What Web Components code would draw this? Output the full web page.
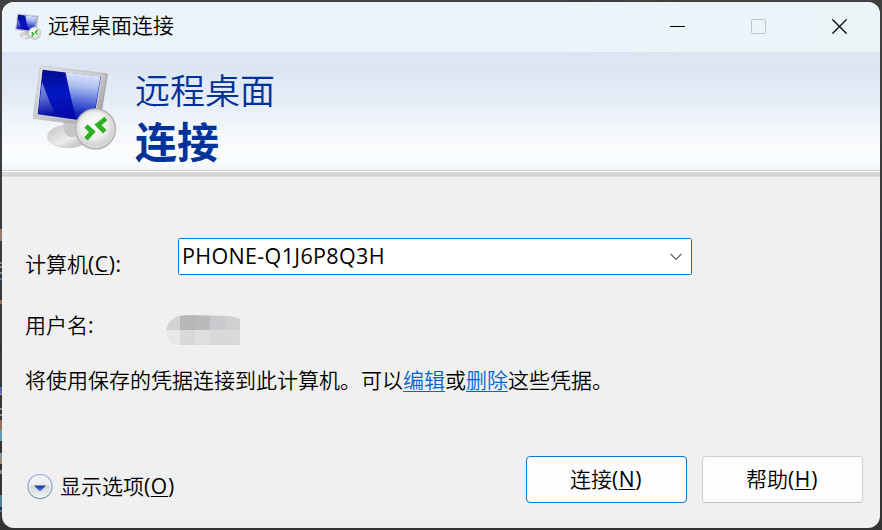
<!DOCTYPE html>
<html lang="zh-CN">
<head>
<meta charset="utf-8">
<title>远程桌面连接</title>
<style>
html,body{margin:0;width:882px;height:530px;overflow:hidden}
body{font:21px/28px "Open Sans","Noto Sans CJK SC",sans-serif;color:#000;box-sizing:border-box;padding:2px;
background:linear-gradient(#0000 0 229px,#957b6a 229px 241px,#0000 241px 262px,#8a8a8c 262px 264px,#0000 264px 266px,#8a8a8c 266px 268px,#0000 268px 272px,#888 272px 274px,#0000 274px 278px,#3d6fc4 278px 280px,#0000 280px 300px,#8f6c60 300px 304px,#0000 304px 387px,#5862ad 387px 393px,#999 394px 395px,#0000 395px 408px,#909090 408px 410px,#0000 410px 414px,#909090 414px 416px,#0000 416px 420px,#94735c 420px 430px,#609ab4 430px 441px,#0000 441px 453px,#83949f 453px 458px,#a28c78 460px 464px,#0000 464px 470px,#8c8680 470px 474px,#0000 474px 495px,#4f8199 495px 507px,#0000 507px 510px,#3b70be 510px 512px,#0000 512px) 0 0/2px 530px no-repeat,linear-gradient(#404040,#38393c 50%,#343434)}
</style>
</head>
<body>
<rd-window></rd-window>
<script>
const define=(name,html)=>customElements.define(name,class extends HTMLElement{
  constructor(){super();const t=document.createElement('template');t.innerHTML=html;this.attachShadow({mode:'open'}).append(t.content.cloneNode(true));}
});

define('rd-icon',`<style>:host{display:block}svg{display:block;width:100%;height:100%}</style>
<svg viewBox="0 0 86 88">
<defs>
<linearGradient id="s" x1="0" y1="0" x2=".25" y2="1"><stop offset="0" stop-color="#000c8a"/><stop offset=".5" stop-color="#0416c4"/><stop offset="1" stop-color="#0208a4"/></linearGradient>
<linearGradient id="g" gradientUnits="userSpaceOnUse" x1="52" y1="8" x2="46" y2="56"><stop offset="0" stop-color="#dfe7fc"/><stop offset=".3" stop-color="#a9bbf2"/><stop offset=".62" stop-color="#4c63d6"/><stop offset=".9" stop-color="#0a1cb8"/></linearGradient>
<linearGradient id="h" gradientUnits="userSpaceOnUse" x1="9" y1="17" x2="13" y2="50"><stop offset="0" stop-color="#8494e0"/><stop offset=".5" stop-color="#5868d0"/><stop offset="1" stop-color="#0810a8"/></linearGradient>
<linearGradient id="f" x1="0" y1="0" x2="1" y2="1"><stop offset="0" stop-color="#e2e2e2"/><stop offset=".5" stop-color="#c9c9c9"/><stop offset="1" stop-color="#969696"/></linearGradient>
<linearGradient id="b" x1="0" y1="0" x2="1" y2="1"><stop offset="0" stop-color="#c2c2c2"/><stop offset=".55" stop-color="#ececec"/><stop offset="1" stop-color="#aaa"/></linearGradient>
<radialGradient id="c" cx=".45" cy=".4"><stop offset="0" stop-color="#fff"/><stop offset=".7" stop-color="#ededed"/><stop offset="1" stop-color="#d3d3d3"/></radialGradient>
</defs>
<ellipse cx="35" cy="71.500" rx="20.500" ry="11.300" fill="url(#b)" stroke="#c8c8c8" stroke-width=".6"/>
<path d="M30 56 46 60 45 70Q37 75 32 68Z" fill="#c6c6c6"/>
<path d="M7.500 1.700Q8 .8 9.500 1L73.500 8.500 74.500 9.800 66 62 .800 53.500 0 52Z" fill="url(#f)" stroke="#b9bdc1" stroke-width=".6"/>
<path d="M9.500 4.500 68 11.500 60.500 57.500 4.500 49.500Z" fill="url(#s)"/>
<path d="M32.500 7.300 67.500 11.600 60 57.300 43.500 55Q37 31 32.500 7.300Z" fill="url(#g)"/>
<path d="M9 17Q15 33 23 51.800L5 49Z" fill="url(#h)"/>
<path d="M9 4.200 68.500 11.300 61 57.700 4 49.500Z" fill="none" stroke="#e4e8ee" stroke-width=".6"/>
<path d="M70.500 9 74 9.700 67 55" fill="none" stroke="#a3a6a9" stroke-width="1"/>
<circle cx="62.500" cy="64" r="20" fill="url(#c)" stroke="#b6b6b6" stroke-width="1.500"/>
<circle cx="62.500" cy="64" r="18" fill="none" stroke="#ddd" stroke-width="1"/>
<path d="M53 61 59.300 66.800 53 74M73 53.500 65 60 71.800 66.800" fill="none" stroke="#2fb022" stroke-width="4.800"/>
</svg>`);

define('rd-titlebar',`<style>
:host{display:flex;height:50px;align-items:center;background:linear-gradient(90deg,#ebf4fb,#ebf4fa 60%,#ebf5f8);padding-left:13px;box-sizing:border-box}
rd-icon{width:27px;height:28px;margin-top:-1px}
.title{margin-left:6px;flex:1;font-weight:350;white-space:nowrap;margin-top:-4px}
.controls{display:grid;grid-template-columns:81px 81px 81px;height:48px;margin-top:-2px;align-items:center;justify-items:center}
svg{display:block}
</style><rd-icon></rd-icon><div class="title"><slot></slot></div>
<div class="controls">
<svg width="15" height="15"><path d="M0 7.500H15" stroke="#000"/></svg>
<svg width="15" height="15"><rect x=".5" y=".5" width="14" height="14" rx="1" fill="none" stroke="#bec4c7"/></svg>
<svg width="15" height="15"><path d="M.4.4 14.600 14.600M14.600.4.4 14.600" stroke="#111" stroke-width="1.400"/></svg>
</div>`);

define('rd-banner',`<style>
:host{display:flex;height:118px;box-sizing:border-box;padding:13px 0 0 31px;background:linear-gradient(#dbe5f4 0,#dde6f3 17%,#e7eef8 45%,#f3f6fa 64%,#fafcfd 85%,#f8fcfe 92%,#f2f5f8);color:#039}
rd-icon{width:86px;height:88px;flex:none}
.text{margin-left:16px;white-space:nowrap}
.a{font-size:35px;line-height:52px;font-weight:350}
.b{font-size:42px;line-height:50px;font-weight:700}
</style><rd-icon></rd-icon><div class="text"><div class="a"><slot name="first"></slot></div><div class="b"><slot name="second"></slot></div></div>`);

define('rd-rule',`<style>:host{display:block;height:8px;background:linear-gradient(#c9ccd0 0 1px,#fdfdfd 1px 2px,#d8d8d8 2px 3px,#d8d8d8 3px 5px,#cfcfcf 5px 6px,#dfdfdf 6px 7px,#f0f0f0 7px)}</style>`);

define('rd-field',`<style>:host{display:grid;grid-template-columns:153px auto;white-space:nowrap}.l{font-weight:350}</style><div class="l"><slot name="label"></slot></div><slot></slot>`);

define('rd-combo',`<style>
:host{display:flex;box-sizing:border-box;width:514px;height:37px;border:1px solid #0078d4;border-radius:1.500px;background:#fff;align-items:center;justify-content:space-between;padding:0 9px 0 3px}
span{font-size:21.500px;letter-spacing:.34px;margin-top:-2px}
</style><span><slot></slot></span><svg width="12" height="8"><path d="M.7 1 6 6.300 11.300 1" fill="none" stroke="#606060" stroke-width="1.200"/></svg>`);

define('rd-mosaic',`<style>:host{display:block;width:74px;height:30px}svg{display:block}</style>
<svg width="74" height="30"><defs><clipPath id="m"><path d="M12 1 22 0 62 1Q70 2 74 4V30H7Q0 25 0 15 2 5 12 1Z"/></clipPath></defs>
<g clip-path="url(#m)" shape-rendering="crispEdges">
<path fill="#d2d2d2" d="M0 0H14V15H0Z"/><path fill="#b7b7b7" d="M14 0H32V15H14Z"/><path fill="#bbb9b9" d="M32 0H44V15H32Z"/><path fill="#c9cacd" d="M44 0H59V15H44Z"/><path fill="#cfd0d2" d="M59 0H74V15H59Z"/>
<path fill="#e8e8e8" d="M0 15H14V30H0Z"/><path fill="#d8d9d7" d="M14 15H29V30H14Z"/><path fill="#dfe0dd" d="M29 15H44V30H29Z"/><path fill="#d7d9d9" d="M44 15H59V30H44Z"/><path fill="#d8d9da" d="M59 15H74V30H59Z"/></g></svg>`);

define('rd-link',`<style>:host{color:#06c;text-decoration:underline;text-decoration-thickness:1px;text-underline-offset:3px;text-decoration-skip-ink:none}</style><slot></slot>`);
define('rd-key',`<style>:host{font-weight:400;letter-spacing:.5px}u{text-decoration:underline;text-decoration-thickness:1px;text-underline-offset:2px;text-decoration-skip-ink:none;letter-spacing:.9px}</style>(<u><slot></slot></u>)`);

define('rd-expander',`<style>:host{display:flex;align-items:center;gap:7px;font-weight:350;white-space:nowrap}svg{display:block}span{margin-top:-1px}</style>
<svg width="26" height="26"><defs><linearGradient id="e" x1="0" y1="0" x2="0" y2="1"><stop offset="0" stop-color="#fafbfb"/><stop offset=".48" stop-color="#e5e9e7"/><stop offset=".5" stop-color="#d3d9d7"/><stop offset="1" stop-color="#f2f5f3"/></linearGradient><linearGradient id="r" x1="0" y1="0" x2="0" y2="1"><stop offset="0" stop-color="#9cabed"/><stop offset="1" stop-color="#8c99b5"/></linearGradient><linearGradient id="t" x1="0" y1="0" x2="0" y2="1"><stop offset="0" stop-color="#182c78"/><stop offset=".5" stop-color="#3459d6"/><stop offset="1" stop-color="#5b82ee"/></linearGradient></defs>
<circle cx="13" cy="12.500" r="12" fill="url(#e)" stroke="url(#r)" stroke-width="1.300"/><circle cx="13" cy="12.500" r="10.800" fill="none" stroke="#f8fafa"/><path d="M7 11.500H19L13 17.500Z" fill="url(#t)"/></svg><span><slot></slot></span>`);

define('rd-button',`<style>:host{display:flex;box-sizing:border-box;width:161px;height:47px;border:1px solid #d0d0d0;border-bottom-color:#bcbcbc;border-radius:4px;background:#fdfdfd;align-items:center;justify-content:center;font-weight:350}:host([primary]){border-color:#0078d4}span{margin:-2px 0 0 -1px}</style><span><slot></slot></span>`);

define('rd-window',`<style>
:host{display:flex;flex-direction:column;width:878px;height:526px;border-radius:12px;background:#f0f0f0;overflow:hidden}
main{flex:1;display:flex;flex-direction:column;padding:60px 17px 25px 23px}
.c [slot=label]{padding-top:12px;height:25px}
.u{margin-top:35px}.u rd-mosaic{margin:5px 0 0 -12px}
.u [slot=label]{margin-top:1px}
.colon{font-weight:400}
p{margin:21px 0 0;font-weight:350;white-space:nowrap}
footer{margin-top:auto;display:flex;align-items:center}
rd-expander{margin:14px auto 0 2px}
.actions{display:flex;gap:15px}
</style>
<rd-titlebar>远程桌面连接</rd-titlebar>
<rd-banner><span slot="first">远程桌面</span><span slot="second">连接</span></rd-banner><rd-rule></rd-rule>
<main>
<rd-field class="c"><div slot="label">计算机<rd-key>C</rd-key><span class="colon">:</span></div><rd-combo>PHONE-Q1J6P8Q3H</rd-combo></rd-field>
<rd-field class="u"><div slot="label">用户名<span class="colon">:</span></div><rd-mosaic></rd-mosaic></rd-field>
<p>将使用保存的凭据连接到此计算机。可以<rd-link>编辑</rd-link>或<rd-link>删除</rd-link>这些凭据。</p>
<footer><rd-expander>显示选项<rd-key>O</rd-key></rd-expander><div class="actions"><rd-button primary>连接<rd-key>N</rd-key></rd-button><rd-button>帮助<rd-key>H</rd-key></rd-button></div></footer>
</main>`);
</script>
</body>
</html>
